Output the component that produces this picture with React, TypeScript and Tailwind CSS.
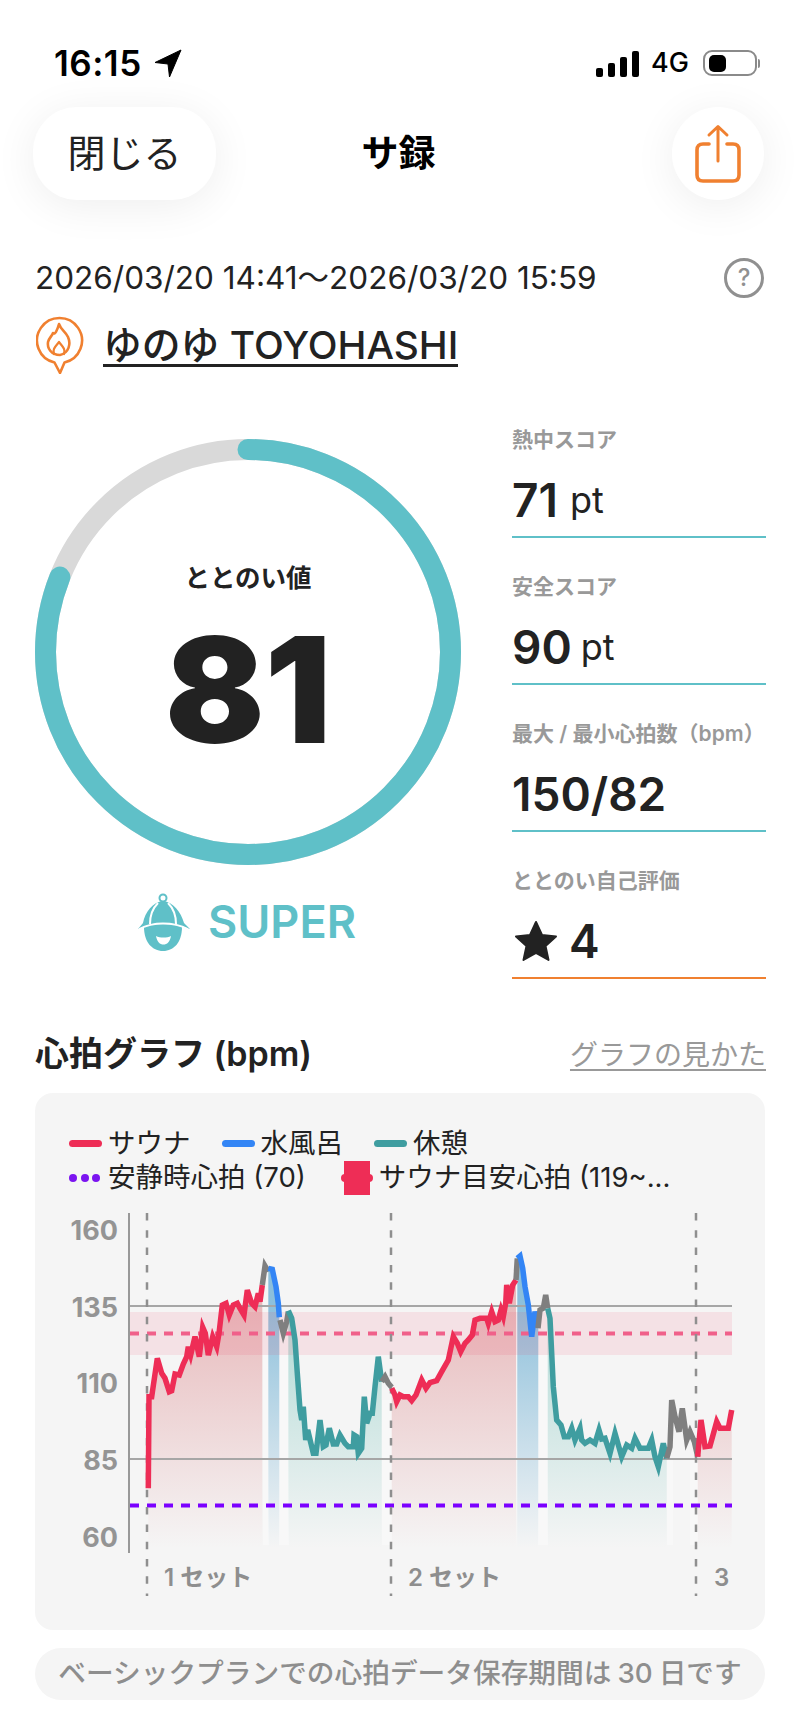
// Traced from the screenshot: each run is [x, y] in a 3x crop, `base` is the crop's left edge.
type Pt = [number, number];
const at = (base: number, pts: Pt[]): Pt[] => pts.map(([x, y]) => [base + x / 3, 1240 + y / 3]);

const red1 = at(140, [[25, 745], [27, 470], [35, 470], [52, 355], [65, 400], [75, 415], [88, 455], [95, 452], [105, 402], [118, 405], [130, 372], [140, 350], [145, 320], [152, 345], [165, 290], [178, 350], [188, 262], [196, 280], [205, 345], [218, 290], [230, 320], [237, 280], [247, 195], [258, 190], [268, 225], [280, 195], [292, 190], [300, 205], [312, 225], [322, 150], [335, 190], [345, 200], [355, 160], [360, 185], [367, 135]]);
const gray1 = at(140, [[367, 135], [375, 78], [385, 95]]);
const blue1 = at(140, [[385, 85], [397, 88], [408, 140], [415, 190], [418, 232]]);
const gray2 = at(140, [[420, 240], [430, 280], [440, 245], [445, 215]]);
const teal1 = [
  ...at(140, [[445, 212], [455, 235], [465, 300], [472, 400], [480, 510], [485, 540], [490, 500], [497, 600], [503, 570], [520, 640], [528, 640], [540, 540], [550, 620], [558, 615], [568, 565], [580, 612], [590, 612], [600, 585]]),
  ...at(340, [[15, 610], [25, 620], [40, 620], [42, 585], [50, 590], [55, 640], [65, 625], [73, 470], [80, 550], [90, 520], [97, 520], [105, 440], [115, 350], [125, 425]]),
];
const gray3 = at(340, [[125, 425], [135, 410], [145, 430], [155, 442]]);
const red2 = at(340, [[155, 445], [165, 465], [170, 485], [180, 465], [190, 470], [205, 470], [215, 482], [228, 465], [245, 420], [258, 445], [270, 428], [290, 422], [305, 395], [325, 360], [340, 290], [352, 310], [362, 335], [375, 310], [385, 300], [397, 285], [405, 240], [420, 235], [440, 235], [445, 250], [455, 215], [465, 245], [475, 240], [483, 210], [490, 230], [497, 190], [500, 135], [508, 190], [518, 135], [528, 120]]);
const gray4 = at(340, [[528, 120], [532, 55]]);
const blue2 = at(340, [[532, 55], [540, 48], [548, 85], [555, 140], [565, 195], [575, 290], [585, 215], [595, 260]]);
const gray5 = at(535, [[9, 265], [15, 210], [25, 205], [32, 165], [38, 205]]);
const teal2 = at(535, [[38, 205], [45, 235], [50, 340], [55, 440], [65, 540], [78, 555], [88, 590], [100, 590], [110, 565], [120, 600], [135, 565], [140, 600], [150, 610], [165, 600], [180, 610], [192, 570], [200, 597], [210, 595], [225, 640], [240, 580], [260, 650], [275, 615], [290, 625], [300, 595], [315, 625], [340, 625], [350, 600], [360, 650], [370, 680], [385, 610], [395, 655]]);
const gray6 = at(535, [[395, 655], [405, 620], [410, 480], [420, 530], [432, 575], [442, 505], [455, 600], [465, 575], [478, 605], [488, 650]]);
const red3 = at(535, [[488, 650], [498, 540], [510, 620], [525, 618], [545, 545], [555, 565], [580, 565], [590, 510]]);

const line = (pts: Pt[]) => pts.map(([x, y]) => `${x.toFixed(1)},${y.toFixed(1)}`).join(" ");
const area = (pts: Pt[]) =>
  `${pts[0][0].toFixed(1)},1548 ${line(pts)} ${pts[pts.length - 1][0].toFixed(1)},1548`;

const RED = "#ee2d56";
const BLUE = "#3385f5";
const TEAL = "#3f9da0";
const GRAY = "#7f7f7f";

const runs: [Pt[], string][] = [
  [red1, RED], [gray1, GRAY], [blue1, BLUE], [gray2, GRAY], [teal1, TEAL], [gray3, GRAY],
  [red2, RED], [gray4, GRAY], [blue2, BLUE], [gray5, GRAY], [teal2, TEAL], [gray6, GRAY], [red3, RED],
];

function HeartChart() {
  return (
    <svg viewBox="35 1195 730 435" width={730} height={435} className="block">
      <defs>
        <linearGradient id="fillRed" gradientUnits="userSpaceOnUse" x1="0" y1="1300" x2="0" y2="1548">
          <stop offset="0" stopColor="#d05055" stopOpacity="0.36" />
          <stop offset="1" stopColor="#d05055" stopOpacity="0" />
        </linearGradient>
        <linearGradient id="fillBlue" gradientUnits="userSpaceOnUse" x1="0" y1="1300" x2="0" y2="1548">
          <stop offset="0" stopColor="#5fa8d0" stopOpacity="0.7" />
          <stop offset="1" stopColor="#5fa8d0" stopOpacity="0" />
        </linearGradient>
        <linearGradient id="fillTeal" gradientUnits="userSpaceOnUse" x1="0" y1="1300" x2="0" y2="1548">
          <stop offset="0" stopColor="#45b0a5" stopOpacity="0.4" />
          <stop offset="1" stopColor="#45b0a5" stopOpacity="0" />
        </linearGradient>
      </defs>

      {[[263, 6, 1355], [279, 10, 1355], [382, 10, 1400], [538, 10, 1355], [667, 6, 1460], [690, 8, 1460]].map(([x, w, y]) => (
        <rect key={x} x={x} y={y} width={w} height={1545 - y} fill="#ffffff" opacity={0.3} />
      ))}

      <polygon points={area(red1)} fill="url(#fillRed)" />
      <polygon points={area(blue1)} fill="url(#fillBlue)" />
      <polygon points={area(teal1)} fill="url(#fillTeal)" />
      <polygon points={area(red2)} fill="url(#fillRed)" />
      <polygon points={area(blue2)} fill="url(#fillBlue)" />
      <polygon points={area(teal2)} fill="url(#fillTeal)" />
      <polygon points={area(red3)} fill="url(#fillRed)" />

      <rect x={130} y={1312} width={602} height={43} fill={RED} opacity={0.1} />
      <line x1={129} y1={1306} x2={732} y2={1306} stroke="#a6a6a6" strokeWidth={2} />
      <line x1={129} y1={1459} x2={732} y2={1459} stroke="#a6a6a6" strokeWidth={2} />
      <line x1={130} y1={1333.5} x2={732} y2={1333.5} stroke="#f0608a" strokeWidth={4} strokeDasharray="9 8" />
      <line x1={130} y1={1505.5} x2={732} y2={1505.5} stroke="#7b00ff" strokeWidth={4} strokeDasharray="9 8" />
      <line x1={129} y1={1213} x2={129} y2={1553} stroke="#999999" strokeWidth={2} />
      {[147, 391, 696].map((x) => (
        <line key={x} x1={x} y1={1213} x2={x} y2={1596} stroke="#8f8f8f" strokeWidth={2.5} strokeDasharray="7.5 9.8" />
      ))}

      {runs.map(([pts, color], i) => (
        <polyline key={i} points={line(pts)} fill="none" stroke={color} strokeWidth={5.5} />
      ))}

      {[[160, 1240], [135, 1317], [110, 1393], [85, 1470], [60, 1547]].map(([v, y]) => (
        <text key={v} x={118} y={y} textAnchor="end" className="fill-[#949494] text-[27px] font-bold">
          {v}
        </text>
      ))}
      <text x={164} y={1586} className="fill-[#8e8e8e] text-[24px] font-semibold">1 セット</text>
      <text x={408} y={1586} className="fill-[#8e8e8e] text-[24px] font-semibold">2 セット</text>
      <text x={714} y={1586} className="fill-[#8e8e8e] text-[24px] font-semibold">3</text>
    </svg>
  );
}

function Gauge() {
  const r = 202.5;
  const c = 2 * Math.PI * r;
  return (
    <div className="relative h-[426px] w-[426px]">
      <svg width={426} height={426} className="-rotate-90">
        <circle cx={213} cy={213} r={r} fill="none" stroke="#d9d9d9" strokeWidth={21} />
        <circle
          cx={213}
          cy={213}
          r={r}
          fill="none"
          stroke="#5fc0c8"
          strokeWidth={21}
          strokeLinecap="round"
          strokeDasharray={`${c * 0.81} ${c}`}
        />
      </svg>
      <div className="absolute inset-0 flex flex-col items-center">
        <div className="mt-[122px] text-[25.500px] leading-[34px] font-semibold text-[#222222]">ととのい値</div>
        <div className="mt-[8px] text-[147px] leading-[174px] font-black text-[#222222]">81</div>
      </div>
    </div>
  );
}

function Mascot() {
  return (
    <svg width={54} height={60} viewBox="0 0 54 60">
      <circle cx={26} cy={6} r={3.5} fill="none" stroke="#5fc0c8" strokeWidth={2} />
      <path d="M26 9C16 10 8 20 6 31L1 37C8 34 17 31 26 31C35 31 45 34 53 37L47 31C44 20 36 10 26 9Z" fill="#5fc0c8" />
      <path d="M21 11C15 17 13 25 13 32M31 11C37 17 39 25 39 32" fill="none" stroke="#ffffff" strokeWidth={2} />
      <path d="M7 35C16 31 36 31 45 35C45 50 37 59 26 59C15 59 7 50 7 35Z" fill="#5fc0c8" />
      <path d="M2 37C10 33 18 31.500 26 31.500C34 31.500 43 33 51 37" fill="none" stroke="#ffffff" strokeWidth={1.8} />
      <path d="M19 44C23 46 30 46 34 44C33 50 30 52.500 26.500 52.500C23 52.500 20 50 19 44Z" fill="#ffffff" />
    </svg>
  );
}

function Metric({ label, lineColor, children }: { label: string; lineColor: string; children: React.ReactNode }) {
  return (
    <div className={`h-[147px] border-b-2 pt-[33px] ${lineColor}`}>
      <div className="text-[21px] leading-[32px] font-semibold whitespace-nowrap text-[#999999]">{label}</div>
      <div className="mt-[16px] flex h-[56px] items-center text-[46px] leading-[56px] font-semibold text-[#222222]">
        {children}
      </div>
    </div>
  );
}

function Swatch({ color }: { color: string }) {
  return <span className={`h-[7px] w-[33px] rounded-full ${color}`} />;
}

export default function App() {
  return (
    <div className="flex h-[1732px] w-[800px] flex-col overflow-hidden bg-white font-[Inter,'Noto_Sans_CJK_JP',sans-serif] text-[#222222]">
      {/* status bar */}
      <div className="flex h-[107px] items-start justify-between pt-[47px] pr-[40px] pl-[54px] text-black">
        <div className="flex items-center gap-[12px]">
          <span className="text-[35px] leading-[32px] font-semibold tracking-[0.5px]">16:15</span>
          <svg width={28} height={28} viewBox="0 0 28 28">
            <path d="M27 1L1 13.500L14 15L15.500 28Z" fill="#000000" stroke="#000000" strokeLinejoin="round" />
          </svg>
        </div>
        <div className="flex items-center">
          <div className="flex h-[27px] items-end gap-[5px]">
            <span className="h-[9px] w-[7px] rounded-[2px] bg-black" />
            <span className="h-[14px] w-[7px] rounded-[2px] bg-black" />
            <span className="h-[20px] w-[7px] rounded-[2px] bg-black" />
            <span className="h-[26px] w-[7px] rounded-[2px] bg-black" />
          </div>
          <span className="ml-[12px] text-[27px] leading-[32px] font-medium">4G</span>
          <div className="ml-[14px] flex h-[26px] w-[54px] items-center rounded-[9px] border-2 border-[#8a8a8a] pl-[4px]">
            <span className="h-[17px] w-[17px] rounded-[5px] bg-black" />
          </div>
          <span className="ml-[1px] h-[9px] w-[2px] rounded-r bg-[#8a8a8a]" />
        </div>
      </div>

      {/* header */}
      <div className="grid h-[93px] grid-cols-[1fr_auto_1fr] items-center pr-[36px] pl-[33px]">
        <button className="flex h-[93px] w-[183px] items-center justify-center rounded-[44px] bg-white text-[38px] shadow-[0_6px_44px_rgba(0,0,0,0.07)]">
          閉じる
        </button>
        <div className="text-[37px] font-bold text-black">サ録</div>
        <button className="flex h-[93px] w-[92px] items-center justify-center justify-self-end rounded-full bg-white shadow-[0_6px_44px_rgba(0,0,0,0.07)]">
          <svg width={48} height={60} viewBox="0 0 48 60" fill="none" stroke="#f08030" strokeWidth={3.6} strokeLinecap="round" strokeLinejoin="round">
            <path d="M24 3V37M15 11L24 2.500L33 11" strokeWidth={3} />
            <path d="M15 20H9C5 20 3 22 3 26V51C3 55 5 57 9 57H39C43 57 45 55 45 51V26C45 22 43 20 39 20H33" />
          </svg>
        </button>
      </div>

      {/* session info */}
      <div className="mt-[58px] flex h-[40px] items-center justify-between pr-[36px] pl-[35px]">
        <span className="text-[31.500px] whitespace-nowrap">2026/03/20 14:41～2026/03/20 15:59</span>
        <span className="flex h-[40px] w-[40px] items-center justify-center rounded-full border-[3px] border-[#909090] text-[24px] font-medium text-[#909090]">
          ?
        </span>
      </div>
      <div className="mt-[18px] flex h-[58px] items-start pl-[36px]">
        <svg width={48} height={58} viewBox="0 0 48 58" fill="none" stroke="#f08030" strokeLinejoin="round" strokeLinecap="round">
          <path d="M18.500 46.500A22.500 22.500 0 1 1 28.500 46.500L24 57Z" strokeWidth={2.6} />
          <path d="M23 8C25 14 29 15 32 21C35 28 33 37 24 39C15 39 11 32 12 26C13 22 16 20 17 17C19 19 21 15 23 8Z" strokeWidth={2.6} />
          <path d="M18 38C16 33 20 30 23 26C26 30 30 33 28 38" strokeWidth={2.2} />
        </svg>
        <span className="mt-[9px] ml-[19px] border-b-[3px] border-[#222222] text-[38.800px] leading-[39px] font-medium whitespace-nowrap">
          ゆのゆ TOYOHASHI
        </span>
      </div>

      {/* score */}
      <div className="mt-[17px] flex h-[587px] pr-[34px] pl-[35px]">
        <div className="mt-[48px] w-[426px]">
          <Gauge />
          <div className="mt-[27px] flex items-center justify-center gap-[17px] pr-[3px]">
            <Mascot />
            <span className="text-[45px] leading-[56px] font-semibold text-[#5fc0c8]">SUPER</span>
          </div>
        </div>
        <div className="ml-[51px] flex-1">
          <Metric label="熱中スコア" lineColor="border-[#5fc0c8]">
            71<span className="ml-[12px] text-[36px] font-normal">pt</span>
          </Metric>
          <Metric label="安全スコア" lineColor="border-[#5fc0c8]">
            90<span className="ml-[9px] text-[36px] font-normal">pt</span>
          </Metric>
          <Metric label="最大 / 最小心拍数（bpm）" lineColor="border-[#5fc0c8]">
            150/82
          </Metric>
          <Metric label="ととのい自己評価" lineColor="border-[#f08030]">
            <svg width={44} height={42} viewBox="0 0 44 42" className="ml-[2px]">
              <path d="M22 2L28 15L42 16.500L31.500 26L34.500 40L22 33L9.500 40L12.500 26L2 16.500L16 15Z" fill="#222222" stroke="#222222" strokeWidth={2} strokeLinejoin="round" />
            </svg>
            <span className="ml-[11px]">4</span>
          </Metric>
        </div>
      </div>

      {/* heart rate */}
      <div className="mt-[57px] flex h-[40px] items-center justify-between pr-[34px] pl-[35px]">
        <span className="pb-[4px] text-[34px] font-semibold whitespace-nowrap">心拍グラフ (bpm)</span>
        <span className="text-[28px] leading-[36px] text-[#999999] underline underline-offset-[4px]">グラフの見かた</span>
      </div>

      <div className="mx-[35px] mt-[18px] h-[537px] rounded-[18px] bg-[#f5f5f5] pt-[34px]">
        <div className="px-[34px] text-[27.500px] whitespace-nowrap">
          <div className="flex h-[33px] items-center gap-[31px]">
            <div className="flex items-center gap-[6px]"><Swatch color="bg-[#ee2d56]" />サウナ</div>
            <div className="flex items-center gap-[6px]"><Swatch color="bg-[#3385f5]" />水風呂</div>
            <div className="flex items-center gap-[6px]"><Swatch color="bg-[#3f9da0]" />休憩</div>
          </div>
          <div className="flex h-[35px] items-center">
            <div className="flex items-center gap-[8px]">
              <span className="flex w-[31px] justify-between">
                <span className="h-[8px] w-[8px] rounded-full bg-[#7b14f0]" />
                <span className="h-[8px] w-[8px] rounded-full bg-[#7b14f0]" />
                <span className="h-[8px] w-[8px] rounded-full bg-[#7b14f0]" />
              </span>
              安静時心拍 (70)
            </div>
            <div className="ml-[38px] flex items-center gap-[9px]">
              <span className="relative h-[34px] w-[26px] bg-[#ee2d56]">
                <span className="absolute top-[13px] -left-[3px] h-[8px] w-[32px] rounded-full bg-[#ee2d56]" />
              </span>
              サウナ目安心拍 (119~...
            </div>
          </div>
        </div>
        <HeartChart />
      </div>

      <div className="mx-[35px] mt-[18px] flex h-[52px] items-center justify-center rounded-full bg-[#f5f5f5] text-[27.700px] font-medium whitespace-nowrap text-[#8e8e8e]">
        ベーシックプランでの心拍データ保存期間は<span className="mx-[6px]">30</span>日です
      </div>
    </div>
  );
}
